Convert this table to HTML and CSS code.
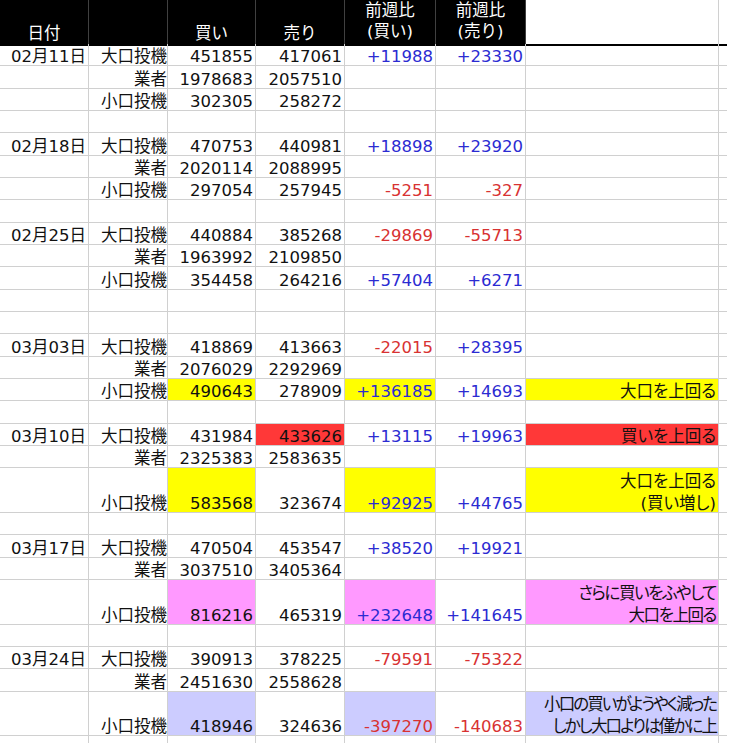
FILE: index.html
```html
<!DOCTYPE html>
<html lang="ja">
<head>
<meta charset="utf-8">
<title>週次ポジション</title>
<link rel="stylesheet" href="styles.css">
</head>
<body>
<div class="sheet">
  <div class="row head">
    <div class="c h"><span>日付</span></div>
    <div class="c h"></div>
    <div class="c h"><span>買い</span></div>
    <div class="c h"><span>売り</span></div>
    <div class="c h"><span class="two">前週比<br>(買い)</span></div>
    <div class="c h"><span class="two">前週比<br>(売り)</span></div>
    <div class="c hw"></div>
    <div class="c end"></div>
  </div>

  <div class="row"><div class="c">02月11日</div><div class="c k">大口投機</div><div class="c">451855</div><div class="c">417061</div><div class="c up">+11988</div><div class="c up">+23330</div><div class="c"></div><div class="c end"></div></div>
  <div class="row"><div class="c"></div><div class="c k">業者</div><div class="c">1978683</div><div class="c">2057510</div><div class="c"></div><div class="c"></div><div class="c"></div><div class="c end"></div></div>
  <div class="row"><div class="c"></div><div class="c k">小口投機</div><div class="c">302305</div><div class="c">258272</div><div class="c"></div><div class="c"></div><div class="c"></div><div class="c end"></div></div>
  <div class="row"><div class="c"></div><div class="c k"></div><div class="c"></div><div class="c"></div><div class="c"></div><div class="c"></div><div class="c"></div><div class="c end"></div></div>

  <div class="row"><div class="c">02月18日</div><div class="c k">大口投機</div><div class="c">470753</div><div class="c">440981</div><div class="c up">+18898</div><div class="c up">+23920</div><div class="c"></div><div class="c end"></div></div>
  <div class="row"><div class="c"></div><div class="c k">業者</div><div class="c">2020114</div><div class="c">2088995</div><div class="c"></div><div class="c"></div><div class="c"></div><div class="c end"></div></div>
  <div class="row"><div class="c"></div><div class="c k">小口投機</div><div class="c">297054</div><div class="c">257945</div><div class="c down">-5251</div><div class="c down">-327</div><div class="c"></div><div class="c end"></div></div>
  <div class="row"><div class="c"></div><div class="c k"></div><div class="c"></div><div class="c"></div><div class="c"></div><div class="c"></div><div class="c"></div><div class="c end"></div></div>

  <div class="row"><div class="c">02月25日</div><div class="c k">大口投機</div><div class="c">440884</div><div class="c">385268</div><div class="c down">-29869</div><div class="c down">-55713</div><div class="c"></div><div class="c end"></div></div>
  <div class="row"><div class="c"></div><div class="c k">業者</div><div class="c">1963992</div><div class="c">2109850</div><div class="c"></div><div class="c"></div><div class="c"></div><div class="c end"></div></div>
  <div class="row"><div class="c"></div><div class="c k">小口投機</div><div class="c">354458</div><div class="c">264216</div><div class="c up">+57404</div><div class="c up">+6271</div><div class="c"></div><div class="c end"></div></div>
  <div class="row"><div class="c"></div><div class="c k"></div><div class="c"></div><div class="c"></div><div class="c"></div><div class="c"></div><div class="c"></div><div class="c end"></div></div>
  <div class="row"><div class="c"></div><div class="c k"></div><div class="c"></div><div class="c"></div><div class="c"></div><div class="c"></div><div class="c"></div><div class="c end"></div></div>

  <div class="row"><div class="c">03月03日</div><div class="c k">大口投機</div><div class="c">418869</div><div class="c">413663</div><div class="c down">-22015</div><div class="c up">+28395</div><div class="c"></div><div class="c end"></div></div>
  <div class="row"><div class="c"></div><div class="c k">業者</div><div class="c">2076029</div><div class="c">2292969</div><div class="c"></div><div class="c"></div><div class="c"></div><div class="c end"></div></div>
  <div class="row"><div class="c"></div><div class="c k">小口投機</div><div class="c yellow">490643</div><div class="c">278909</div><div class="c up yellow">+136185</div><div class="c up">+14693</div><div class="c note yellow"><span>大口を上回る</span></div><div class="c end"></div></div>
  <div class="row"><div class="c"></div><div class="c k"></div><div class="c"></div><div class="c"></div><div class="c"></div><div class="c"></div><div class="c"></div><div class="c end"></div></div>

  <div class="row"><div class="c">03月10日</div><div class="c k">大口投機</div><div class="c">431984</div><div class="c red">433626</div><div class="c up">+13115</div><div class="c up">+19963</div><div class="c note red"><span>買いを上回る</span></div><div class="c end"></div></div>
  <div class="row"><div class="c"></div><div class="c k">業者</div><div class="c">2325383</div><div class="c">2583635</div><div class="c"></div><div class="c"></div><div class="c"></div><div class="c end"></div></div>
  <div class="row tall"><div class="c"></div><div class="c k">小口投機</div><div class="c yellow">583568</div><div class="c">323674</div><div class="c up yellow">+92925</div><div class="c up">+44765</div><div class="c note yellow"><span class="multi">大口を上回る<br>(買い増し)</span></div><div class="c end"></div></div>
  <div class="row"><div class="c"></div><div class="c k"></div><div class="c"></div><div class="c"></div><div class="c"></div><div class="c"></div><div class="c"></div><div class="c end"></div></div>

  <div class="row"><div class="c">03月17日</div><div class="c k">大口投機</div><div class="c">470504</div><div class="c">453547</div><div class="c up">+38520</div><div class="c up">+19921</div><div class="c"></div><div class="c end"></div></div>
  <div class="row"><div class="c"></div><div class="c k">業者</div><div class="c">3037510</div><div class="c">3405364</div><div class="c"></div><div class="c"></div><div class="c"></div><div class="c end"></div></div>
  <div class="row tall"><div class="c"></div><div class="c k">小口投機</div><div class="c pink">816216</div><div class="c">465319</div><div class="c up pink">+232648</div><div class="c up">+141645</div><div class="c note pink"><span class="multi tight">さらに買いをふやして<br>大口を上回る</span></div><div class="c end"></div></div>
  <div class="row"><div class="c"></div><div class="c k"></div><div class="c"></div><div class="c"></div><div class="c"></div><div class="c"></div><div class="c"></div><div class="c end"></div></div>

  <div class="row"><div class="c">03月24日</div><div class="c k">大口投機</div><div class="c">390913</div><div class="c">378225</div><div class="c down">-79591</div><div class="c down">-75322</div><div class="c"></div><div class="c end"></div></div>
  <div class="row"><div class="c"></div><div class="c k">業者</div><div class="c">2451630</div><div class="c">2558628</div><div class="c"></div><div class="c"></div><div class="c"></div><div class="c end"></div></div>
  <div class="row tall"><div class="c"></div><div class="c k">小口投機</div><div class="c lav">418946</div><div class="c">324636</div><div class="c down lav">-397270</div><div class="c down">-140683</div><div class="c note lav"><span class="multi tighter">小口の買いがようやく減った<br>しかし大口よりは僅かに上</span></div><div class="c end"></div></div>
  <div class="row"><div class="c"></div><div class="c k"></div><div class="c"></div><div class="c"></div><div class="c"></div><div class="c"></div><div class="c"></div><div class="c end"></div></div>
</div>
</body>
</html>
```

FILE: styles.css
```css
html, body {
  margin: 0;
  padding: 0;
  background: #fff;
}

.sheet {
  display: flex;
  flex-direction: column;
  width: 727px;
  font-family: "DejaVu Sans", "Noto Sans CJK JP", sans-serif;
  font-size: 16.5px;
  color: #111;
}

.row {
  display: grid;
  grid-template-columns: 89px 79px 88px 89px 91px 90px 193px 8px;
  height: 22.33px;
  flex: none;
}

.row.tall {
  height: 44.66px;
}

.row.head {
  height: 44px;
}

.c {
  box-sizing: border-box;
  display: flex;
  align-items: flex-end;
  justify-content: flex-end;
  border-right: 1px solid #d0d0d0;
  border-bottom: 1px solid #d0d0d0;
  padding: 0 2px 0 0;
  line-height: 16px;
  white-space: nowrap;
  min-width: 0;
}

.c.k {
  padding-right: 0;
}

.c.end {
  border-right: none;
}

.head .c {
  border-bottom: 2px solid #000;
}

.c.h {
  background: #000;
  color: #fff;
  border-right-color: #404040;
  justify-content: center;
  text-align: center;
  padding: 0 0 2px 0;
}

.c.hw {
  background: #fff;
}

.two {
  line-height: 21px;
}

.up {
  color: #2b2bd2;
}

.down {
  color: #d83232;
}

.yellow {
  background: #ffff00;
}

.red {
  background: #ff3838;
}

.pink {
  background: #ff99ff;
}

.lav {
  background: #ccccff;
}

.note span {
  text-align: right;
  font-feature-settings: "palt";
}

.note .multi {
  line-height: 22px;
  margin-bottom: -3px;
}

.note .tight {
  letter-spacing: -1.4px;
}

.note .tighter {
  letter-spacing: -1.9px;
}
```
